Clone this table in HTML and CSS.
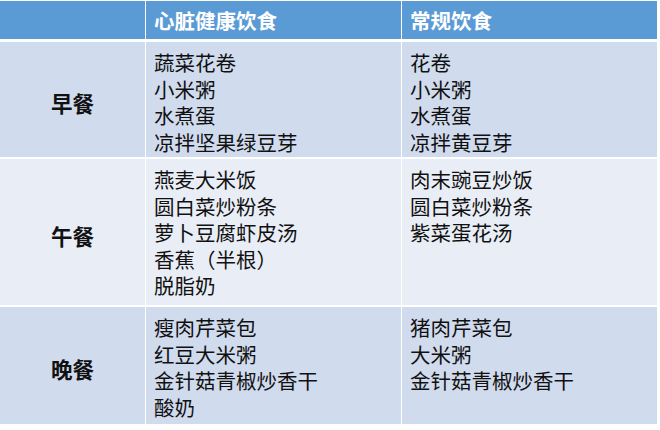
FILE: index.html
```html
<!DOCTYPE html>
<html lang="zh-CN">
<head>
<meta charset="utf-8">
<title>饮食对比</title>
<link rel="stylesheet" href="styles.css">
</head>
<body>
<div class="table">
  <div class="cell head"></div>
  <div class="cell head">心脏健康饮食</div>
  <div class="cell head">常规饮食</div>

  <div class="cell label odd">早餐</div>
  <div class="cell body odd">蔬菜花卷<br>小米粥<br>水煮蛋<br>凉拌坚果绿豆芽</div>
  <div class="cell body odd">花卷<br>小米粥<br>水煮蛋<br>凉拌黄豆芽</div>

  <div class="cell label even">午餐</div>
  <div class="cell body even">燕麦大米饭<br>圆白菜炒粉条<br>萝卜豆腐虾皮汤<br>香蕉（半根）<br>脱脂奶</div>
  <div class="cell body even">肉末豌豆炒饭<br>圆白菜炒粉条<br>紫菜蛋花汤</div>

  <div class="cell label odd">晚餐</div>
  <div class="cell body odd">瘦肉芹菜包<br>红豆大米粥<br>金针菇青椒炒香干<br>酸奶</div>
  <div class="cell body odd">猪肉芹菜包<br>大米粥<br>金针菇青椒炒香干</div>
</div>
</body>
</html>
```
FILE: styles.css
```css
html, body {
  margin: 0;
  padding: 0;
  background: #ffffff;
}
body {
  font-family: "Noto Sans CJK SC", "Noto Sans", sans-serif;
  color: #111111;
}
.table {
  display: grid;
  grid-template-columns: 145px 255px 255px;
  grid-template-rows: 39px 115px 146px 117px;
  column-gap: 1px;
  row-gap: 2px;
  margin-top: 1px;
}
.cell {
  box-sizing: border-box;
  font-size: 20.5px;
}
.head {
  background: #5b9bd5;
  color: #ffffff;
  font-weight: bold;
  line-height: 39px;
  padding-left: 8px;
  margin-bottom: 1px;
}
.odd {
  background: #d0dbee;
}
.even {
  background: #e9eef6;
}
.label {
  display: flex;
  align-items: center;
  justify-content: center;
  font-weight: bold;
  font-size: 21.5px;
  padding-top: 6px;
}
.body {
  line-height: 26.5px;
  padding: 7px 8px 0 8px;
}
```
